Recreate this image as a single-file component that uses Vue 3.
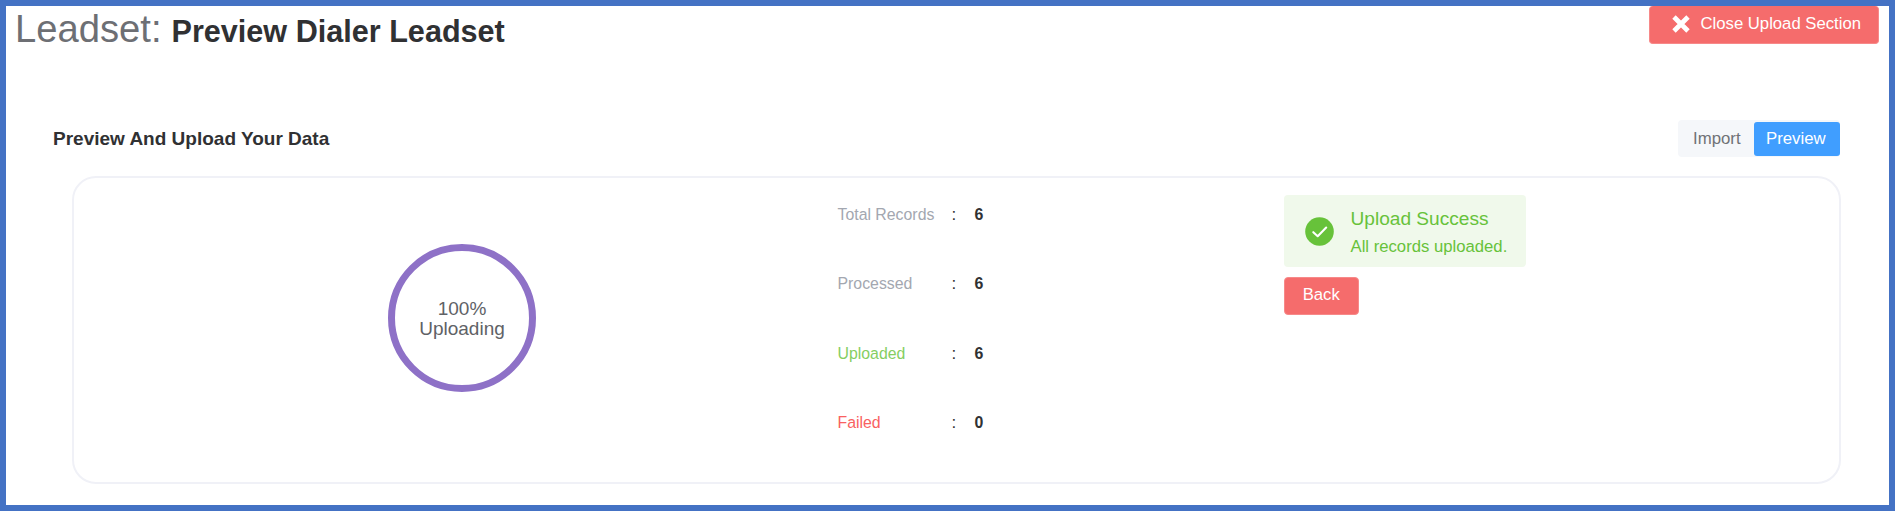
<script setup>
const stats = [
  { label: 'Total Records', value: 6, tone: 'muted' },
  { label: 'Processed', value: 6, tone: 'muted' },
  { label: 'Uploaded', value: 6, tone: 'ok' },
  { label: 'Failed', value: 0, tone: 'bad' }
]
</script>

<template>
  <main class="frame">
    <header class="topbar">
      <h1 class="title"><span class="prefix">Leadset:</span><strong class="name">Preview Dialer Leadset</strong></h1>
      <button class="btn close">
        <svg class="cross" viewBox="0 0 18 18"><path d="M2 2 16 16M16 2 2 16" fill="none" stroke="#fff" stroke-width="4.8" /></svg>
        <span>Close Upload Section</span>
      </button>
    </header>

    <div class="section-head">
      <h2 class="section-title">Preview And Upload Your Data</h2>
      <nav class="tabs">
        <span class="tab">Import</span>
        <span class="tab active">Preview</span>
      </nav>
    </div>

    <section class="card">
      <div class="progress">
        <span>100%</span>
        <span>Uploading</span>
      </div>

      <div class="stats">
        <div v-for="s in stats" :key="s.label" class="row">
          <span class="label" :class="s.tone">{{ s.label }}</span>
          <span class="colon">:</span>
          <span class="value">{{ s.value }}</span>
        </div>
      </div>

      <div class="result">
        <div class="alert">
          <svg class="check" viewBox="0 0 29 29">
            <circle cx="14.5" cy="14.5" r="14.3" fill="#67c23a" />
            <path d="M8.3 15.2 12.7 19.2 21.2 10.5" fill="none" stroke="#fff" stroke-width="2.1" stroke-linecap="round" stroke-linejoin="round" />
          </svg>
          <div class="alert-text">
            <div class="alert-title">Upload Success</div>
            <div class="alert-desc">All records uploaded.</div>
          </div>
        </div>
        <button class="btn back">Back</button>
      </div>
    </section>
  </main>
</template>

<style>
body {
  margin: 0;
  background: #fff;
}
</style>

<style scoped>
.frame {
  box-sizing: border-box;
  width: 1895px;
  height: 511px;
  border: 6px solid #4472c4;
  background: #fff;
  overflow: hidden;
  font-family: "Liberation Sans", Arial, sans-serif;
  color: #303133;
}
.topbar {
  display: flex;
  justify-content: space-between;
  align-items: flex-start;
  height: 114px;
  padding: 0 10px 0 9px;
}
.title {
  display: flex;
  align-items: baseline;
  margin: 0;
  line-height: 45px;
  font-weight: 400;
}
.prefix {
  width: 156.5px;
  font-size: 38.2px;
  color: #6d6f74;
}
.name {
  font-size: 30.6px;
}
.btn {
  box-sizing: border-box;
  border: 1px solid #f78989;
  border-radius: 4px;
  background: #f56c6c;
  color: #fff;
  font: 16.7px "Liberation Sans", Arial, sans-serif;
}
.close {
  display: flex;
  align-items: center;
  width: 230px;
  height: 38px;
  padding: 0 0 1px 22px;
  border-top: 0;
}
.cross {
  width: 18px;
  height: 18px;
  margin-right: 10.5px;
}
.section-head {
  display: flex;
  justify-content: space-between;
  align-items: center;
  height: 37px;
  padding: 0 49px 0 47px;
}
.section-title {
  margin: 0;
  font-size: 19px;
  line-height: 36px;
}
.tabs {
  box-sizing: border-box;
  display: flex;
  width: 162px;
  height: 37px;
  padding: 1.5px 0;
  border-radius: 4px;
  background: #f5f7fa;
}
.tab {
  box-sizing: border-box;
  width: 76px;
  height: 34px;
  padding-left: 15px;
  font-size: 16.8px;
  line-height: 34px;
  color: #707276;
}
.tab.active {
  width: 86px;
  padding-left: 12px;
  border-radius: 3px;
  background: #409eff;
  color: #fff;
}
.card {
  box-sizing: border-box;
  display: flex;
  align-items: flex-start;
  width: 1769px;
  height: 308px;
  margin: 19px 0 0 66px;
  border: 2px solid #f0f1f7;
  border-radius: 24px;
}
.progress {
  box-sizing: border-box;
  display: flex;
  flex-direction: column;
  align-items: center;
  justify-content: center;
  width: 148px;
  height: 148px;
  margin: 66px 301.5px 0 314px;
  padding-top: 1px;
  border: 7.5px solid #8e71c7;
  border-radius: 50%;
  font-size: 19px;
  line-height: 19.3px;
  color: #606266;
}
.stats {
  width: 446.5px;
  padding-top: 2px;
}
.row {
  display: flex;
  align-items: baseline;
  height: 69.3px;
  line-height: 69.3px;
  font-size: 15.85px;
}
.label {
  width: 114px;
}
.muted { color: #a3a7b0; }
.ok { color: #85ce61; }
.bad { color: #f96161; }
.colon {
  width: 23px;
  font-size: 17px;
}
.value {
  font-weight: 700;
}
.result {
  padding-top: 17px;
}
.alert {
  box-sizing: border-box;
  display: flex;
  align-items: center;
  width: 242px;
  height: 72px;
  padding-left: 21px;
  border-radius: 4px;
  background: #f0f9eb;
  color: #67c23a;
}
.check {
  width: 29px;
  height: 29px;
}
.alert-text {
  margin-left: 16.5px;
  padding-top: 1px;
  white-space: nowrap;
}
.alert-title {
  font-size: 19.1px;
  line-height: 29px;
}
.alert-desc {
  font-size: 16.7px;
  line-height: 27px;
}
.back {
  display: block;
  width: 74.5px;
  height: 38px;
  margin-top: 10px;
  padding: 0 0 3px;
}
</style>
